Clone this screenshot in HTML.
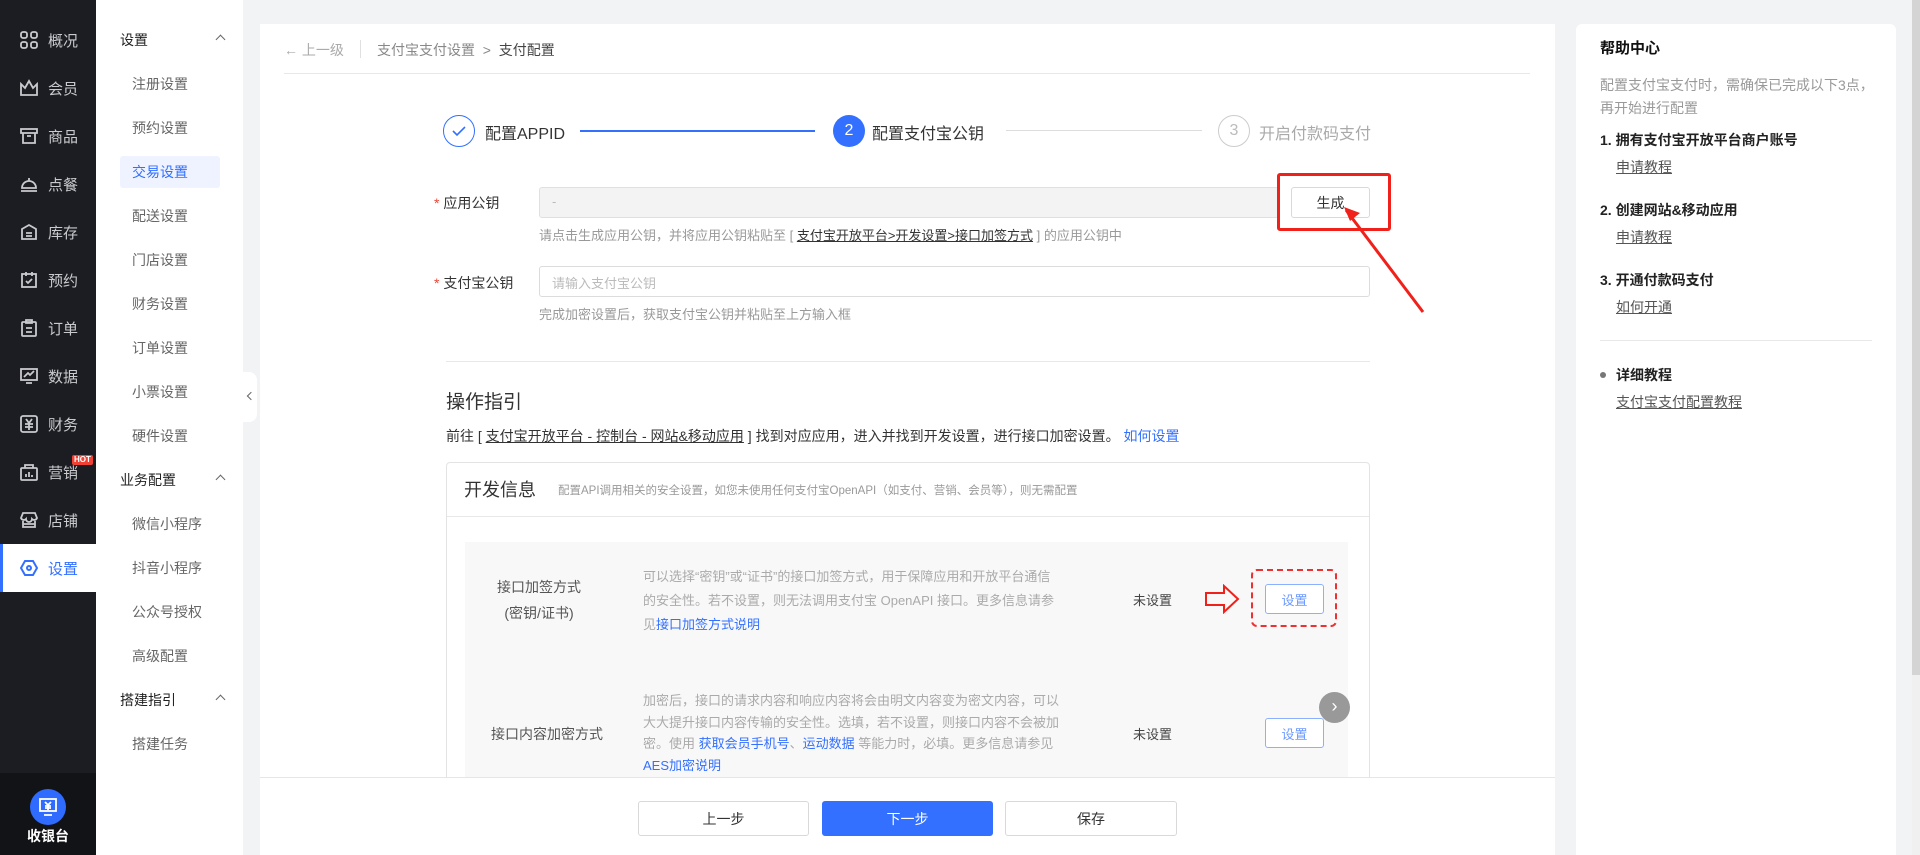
<!DOCTYPE html>
<html><head><meta charset="utf-8"><style>
*{margin:0;padding:0;box-sizing:border-box}
body{width:1920px;height:855px;overflow:hidden;background:#f2f3f5;font-family:"Liberation Sans","Noto Sans CJK SC",sans-serif;position:relative;color:#333}
.a{position:absolute;white-space:nowrap}
.nav{left:0;top:0;width:96px;height:855px;background:#1c1d22}
.ni{position:absolute;left:0;width:96px;height:48px;display:flex;align-items:center;color:#c9cacd;font-size:15px}
.ni svg{margin-left:20px;margin-right:10px}
.sm{left:96px;top:0;width:147px;height:855px;background:#fff}
.sh{position:absolute;left:24px;font-size:14px;color:#222}
.sh:after{content:"";position:absolute;left:97px;top:6px;width:6px;height:6px;border-left:1.5px solid #666;border-top:1.5px solid #666;transform:rotate(45deg)}
.si{position:absolute;left:36px;font-size:14px;color:#666}
.hint{font-size:13px;color:#999}
.btn{position:absolute;border:1px solid #d9d9d9;border-radius:3px;background:#fff;font-size:14px;display:flex;align-items:center;justify-content:center;color:#333}
.lk{color:#333;text-decoration:underline}
.bl{color:#3370ff}
.rp{font-size:14px}
</style></head><body>
<!-- left nav -->
<div class="a nav"></div>
<div class="a" style="left:0;top:773px;width:96px;height:82px;background:#121317"></div>
<div class="a" style="left:0;top:544px;width:96px;height:48px;background:#fff"></div>
<div class="a" style="left:0;top:544px;width:3px;height:48px;background:#3370ff"></div>
<div class="ni" style="top:16px"><svg width="18" height="18" viewBox="0 0 18 18" fill="none" stroke="#c9cacd" stroke-width="1.8"><rect x="1" y="1" width="6" height="6" rx="2"/><rect x="11" y="1" width="6" height="6" rx="2"/><rect x="1" y="11" width="6" height="6" rx="2"/><rect x="11" y="11" width="6" height="6" rx="2"/></svg>概况</div>
<div class="ni" style="top:64px"><svg width="18" height="18" viewBox="0 0 18 18" fill="none" stroke="#c9cacd" stroke-width="1.8"><path d="M1 5l4 4 4-7 4 7 4-4v11H1z"/></svg>会员</div>
<div class="ni" style="top:112px"><svg width="18" height="18" viewBox="0 0 18 18" fill="none" stroke="#c9cacd" stroke-width="1.8"><rect x="1" y="2" width="16" height="4"/><path d="M3 6v10h12V6M7 9h4"/></svg>商品</div>
<div class="ni" style="top:160px"><svg width="18" height="18" viewBox="0 0 18 18" fill="none" stroke="#c9cacd" stroke-width="1.8"><path d="M2 13a7 7 0 0 1 14 0zM9 3v3M1 16h16"/></svg>点餐</div>
<div class="ni" style="top:208px"><svg width="18" height="18" viewBox="0 0 18 18" fill="none" stroke="#c9cacd" stroke-width="1.8"><path d="M2 6l7-4 7 4v10H2zM6 10h6M6 13h6"/></svg>库存</div>
<div class="ni" style="top:256px"><svg width="18" height="18" viewBox="0 0 18 18" fill="none" stroke="#c9cacd" stroke-width="1.8"><rect x="2" y="3" width="14" height="13"/><path d="M6 1v4M12 1v4M6 10l2 2 4-4"/></svg>预约</div>
<div class="ni" style="top:304px"><svg width="18" height="18" viewBox="0 0 18 18" fill="none" stroke="#c9cacd" stroke-width="1.8"><rect x="2" y="3" width="14" height="14" rx="1"/><path d="M6 1h6v3H6zM6 9h6M6 13h6"/></svg>订单</div>
<div class="ni" style="top:352px"><svg width="18" height="18" viewBox="0 0 18 18" fill="none" stroke="#c9cacd" stroke-width="1.8"><rect x="1" y="2" width="16" height="11"/><path d="M4 10l4-4 2 2 4-4M6 16h6"/></svg>数据</div>
<div class="ni" style="top:400px"><svg width="18" height="18" viewBox="0 0 18 18" fill="none" stroke="#c9cacd" stroke-width="1.8"><rect x="1" y="1" width="16" height="16" rx="2"/><path d="M6 4l3 4 3-4M9 8v7M5 9h8M5 12h8"/></svg>财务</div>
<div class="ni" style="top:448px"><svg width="18" height="18" viewBox="0 0 18 18" fill="none" stroke="#c9cacd" stroke-width="1.8"><rect x="1" y="5" width="16" height="12" rx="1"/><path d="M5 5V2h8v3M6 14v-3M9 14V9M12 14v-2"/></svg>营销</div>
<div class="a" style="left:72px;top:455px;background:#f04134;color:#fff;font-size:8px;font-weight:bold;padding:0 2px;line-height:10px;border-radius:2px">HOT</div>
<div class="ni" style="top:496px"><svg width="18" height="18" viewBox="0 0 18 18" fill="none" stroke="#c9cacd" stroke-width="1.8"><path d="M3 2h12l2 5a3 3 0 0 1-5 1 3 3 0 0 1-6 0 3 3 0 0 1-5-1zM3 10v6h12v-6M3 13h12"/></svg>店铺</div>
<div class="ni" style="top:544px;color:#3370ff"><svg width="18" height="18" viewBox="0 0 18 18" fill="none" stroke="#3370ff" stroke-width="2"><path d="M5 2h8l4 7-4 7H5L1 9z"/><circle cx="9" cy="9" r="2"/></svg>设置</div>
<div class="a" style="left:30px;top:789px;width:36px;height:36px;border-radius:50%;background:#2f6bff"></div>
<svg class="a" style="left:38px;top:797px" width="20" height="20" viewBox="0 0 20 20" fill="none" stroke="#fff" stroke-width="1.8"><rect x="2" y="2" width="16" height="12"/><path d="M6 18h8M7 5l3 3 3-3M10 8v5M7 9h6M7 11h6"/></svg>
<div class="a" style="left:27px;top:826px;color:#fff;font-size:14px;font-weight:bold">收银台</div>
<!-- sub menu -->
<div class="a sm">
<div class="sh" style="top:30px">设置</div>
<div class="si" style="top:74px">注册设置</div>
<div class="si" style="top:118px">预约设置</div>
<div class="a" style="left:24px;top:156px;width:100px;height:32px;background:#eef3ff;border-radius:3px"></div>
<div class="si" style="top:162px;color:#3370ff">交易设置</div>
<div class="si" style="top:206px">配送设置</div>
<div class="si" style="top:250px">门店设置</div>
<div class="si" style="top:294px">财务设置</div>
<div class="si" style="top:338px">订单设置</div>
<div class="si" style="top:382px">小票设置</div>
<div class="si" style="top:426px">硬件设置</div>
<div class="sh" style="top:470px">业务配置</div>
<div class="si" style="top:514px">微信小程序</div>
<div class="si" style="top:558px">抖音小程序</div>
<div class="si" style="top:602px">公众号授权</div>
<div class="si" style="top:646px">高级配置</div>
<div class="sh" style="top:690px">搭建指引</div>
<div class="si" style="top:734px">搭建任务</div>
</div>
<div class="a" style="left:243px;top:372px;width:14px;height:50px;background:#fff;border-radius:0 8px 8px 0"></div>
<div class="a" style="left:248px;top:393px;width:6px;height:6px;border-left:1.5px solid #666;border-bottom:1.5px solid #666;transform:rotate(45deg)"></div>
<!-- main card -->
<div class="a" style="left:260px;top:24px;width:1295px;height:831px;background:#fff"></div>
<div class="a" style="left:284px;top:40px;font-size:14px;color:#aaa">← 上一级</div>
<div class="a" style="left:360px;top:40px;width:1px;height:18px;background:#e0e0e0"></div>
<div class="a" style="left:377px;top:40px;font-size:14px;color:#888">支付宝支付设置 &nbsp;&gt;&nbsp; <span style="color:#444">支付配置</span></div>
<div class="a" style="left:284px;top:73px;width:1246px;height:1px;background:#e8e8e8"></div>
<!-- steps -->
<div class="a" style="left:443px;top:115px;width:32px;height:32px;border:1.5px solid #3370ff;border-radius:50%"></div>
<svg class="a" style="left:451px;top:123px" width="16" height="16" viewBox="0 0 16 16" fill="none" stroke="#3370ff" stroke-width="1.6"><path d="M2 8l4 4 8-8"/></svg>
<div class="a" style="left:485px;top:120px;font-size:16px;color:#333">配置APPID</div>
<div class="a" style="left:580px;top:130px;width:235px;height:1.5px;background:#3370ff"></div>
<div class="a" style="left:833px;top:115px;width:32px;height:32px;background:#3370ff;border-radius:50%;color:#fff;font-size:16px;text-align:center;line-height:32px">2</div>
<div class="a" style="left:872px;top:120px;font-size:16px;color:#333">配置支付宝公钥</div>
<div class="a" style="left:1006px;top:130px;width:196px;height:1px;background:#ddd"></div>
<div class="a" style="left:1218px;top:115px;width:32px;height:32px;border:1.5px solid #ccc;border-radius:50%;color:#bbb;font-size:16px;text-align:center;line-height:29px">3</div>
<div class="a" style="left:1259px;top:120px;font-size:16px;color:#aaa">开启付款码支付</div>
<!-- form -->
<div class="a" style="left:434px;top:193px;font-size:14px;color:#333"><span style="color:#f04134">* </span>应用公钥</div>
<div class="a" style="left:539px;top:187px;width:740px;height:31px;background:#f3f3f3;border:1px solid #e0e0e0;border-radius:3px;font-size:13px;color:#bbb;padding:6px 12px">-</div>
<div class="btn" style="left:1291px;top:187px;width:79px;height:31px">生成</div>
<div class="a" style="left:1277px;top:173px;width:114px;height:58px;border:3px solid #f0201a;border-radius:3px"></div>
<svg class="a" style="left:1330px;top:200px" width="100" height="120"><path d="M93 112L16 10" stroke="#f0201a" stroke-width="3"/><path d="M14 7l16 6-10 8z" fill="#f0201a"/></svg>
<div class="a hint" style="left:539px;top:225px">请点击生成应用公钥，并将应用公钥粘贴至 [ <span class="lk">支付宝开放平台&gt;开发设置&gt;接口加签方式</span> ] 的应用公钥中</div>
<div class="a" style="left:434px;top:273px;font-size:14px;color:#333"><span style="color:#f04134">* </span>支付宝公钥</div>
<div class="a" style="left:539px;top:266px;width:831px;height:31px;border:1px solid #dcdcdc;border-radius:3px;font-size:13px;color:#bbb;padding:6px 12px">请输入支付宝公钥</div>
<div class="a hint" style="left:539px;top:304px">完成加密设置后，获取支付宝公钥并粘贴至上方输入框</div>
<div class="a" style="left:446px;top:361px;width:924px;height:1px;background:#e8e8e8"></div>
<div class="a" style="left:446px;top:387px;font-size:19px;color:#333">操作指引</div>
<div class="a" style="left:446px;top:426px;font-size:14px;color:#333">前往 [ <span class="lk">支付宝开放平台 - 控制台 - 网站&amp;移动应用</span> ] 找到对应应用，进入并找到开发设置，进行接口加密设置。 <span class="bl">如何设置</span></div>
<div class="a" style="left:446px;top:462px;width:924px;height:330px;border:1px solid #e3e3e3;border-radius:4px"></div>
<div class="a" style="left:464px;top:476px;font-size:18px;color:#333">开发信息</div>
<div class="a" style="left:558px;top:482px;font-size:11.5px;color:#999">配置API调用相关的安全设置，如您未使用任何支付宝OpenAPI（如支付、营销、会员等），则无需配置</div>
<div class="a" style="left:447px;top:516px;width:922px;height:1px;background:#e8e8e8"></div>
<div class="a" style="left:465px;top:542px;width:883px;height:236px;background:#f8f8f8"></div>
<div class="a" style="left:491px;top:574px;font-size:14px;color:#555;line-height:26px;text-align:center;width:96px">接口加签方式<br>(密钥/证书)</div>
<div class="a" style="left:643px;top:565px;font-size:13px;color:#aaa;line-height:24px">可以选择“密钥”或“证书”的接口加签方式，用于保障应用和开放平台通信<br>的安全性。若不设置，则无法调用支付宝 OpenAPI 接口。更多信息请参<br>见<span class="bl">接口加签方式说明</span></div>
<div class="a" style="left:1133px;top:590px;font-size:13px;color:#444">未设置</div>
<svg class="a" style="left:1204px;top:584px" width="38" height="30"><path d="M2 9h18V2l14 13-14 13v-7H2z" fill="none" stroke="#f0201a" stroke-width="2"/></svg>
<div class="a" style="left:1251px;top:569px;width:86px;height:58px;border:2px dashed #f03030;border-radius:6px"></div>
<div class="btn" style="left:1265px;top:584px;width:59px;height:30px;border-color:#8bb0ff;color:#6d9aff;font-size:13px">设置</div>
<div class="a" style="left:491px;top:724px;font-size:14px;color:#555">接口内容加密方式</div>
<div class="a" style="left:643px;top:690px;font-size:13px;color:#aaa;line-height:21.5px">加密后，接口的请求内容和响应内容将会由明文内容变为密文内容，可以<br>大大提升接口内容传输的安全性。选填，若不设置，则接口内容不会被加<br>密。使用 <span class="bl">获取会员手机号</span>、<span class="bl">运动数据</span> 等能力时，必填。更多信息请参见<br><span class="bl">AES加密说明</span></div>
<div class="a" style="left:1133px;top:724px;font-size:13px;color:#444">未设置</div>
<div class="btn" style="left:1265px;top:718px;width:59px;height:30px;border-color:#8bb0ff;color:#6d9aff;font-size:13px">设置</div>
<div class="a" style="left:1319px;top:692px;width:31px;height:31px;border-radius:50%;background:#999;color:#fff;font-size:18px;text-align:center;line-height:29px">›</div>
<!-- bottom bar -->
<div class="a" style="left:260px;top:777px;width:1295px;height:78px;background:#fff;border-top:1px solid #e6e6e6"></div>
<div class="btn" style="left:638px;top:801px;width:171px;height:35px">上一步</div>
<div class="btn" style="left:822px;top:801px;width:171px;height:35px;background:#3370ff;border-color:#3370ff;color:#fff">下一步</div>
<div class="btn" style="left:1005px;top:801px;width:172px;height:35px">保存</div>
<!-- right panel -->
<div class="a" style="left:1576px;top:24px;width:320px;height:831px;background:#fff;border-radius:6px 6px 0 0"></div>
<div class="a" style="left:1600px;top:37px;font-size:15px;font-weight:bold;color:#111">帮助中心</div>
<div class="a rp" style="left:1600px;top:74px;color:#999;line-height:23px">配置支付宝支付时，需确保已完成以下3点，<br>再开始进行配置</div>
<div class="a rp" style="left:1600px;top:130px;font-weight:bold;color:#222">1. 拥有支付宝开放平台商户账号</div>
<div class="a rp lk" style="left:1616px;top:157px;color:#555">申请教程</div>
<div class="a rp" style="left:1600px;top:200px;font-weight:bold;color:#222">2. 创建网站&amp;移动应用</div>
<div class="a rp lk" style="left:1616px;top:227px;color:#555">申请教程</div>
<div class="a rp" style="left:1600px;top:270px;font-weight:bold;color:#222">3. 开通付款码支付</div>
<div class="a rp lk" style="left:1616px;top:297px;color:#555">如何开通</div>
<div class="a" style="left:1600px;top:340px;width:272px;height:1px;background:#e8e8e8"></div>
<div class="a" style="left:1600px;top:372px;width:6px;height:6px;border-radius:50%;background:#777"></div>
<div class="a rp" style="left:1616px;top:365px;font-weight:bold;color:#222">详细教程</div>
<div class="a rp lk" style="left:1616px;top:392px;color:#555">支付宝支付配置教程</div>
<div class="a" style="left:1912px;top:0;width:8px;height:855px;background:#f0f0f0"></div>
<div class="a" style="left:1912px;top:0;width:8px;height:675px;background:#d4d4d4"></div>
</body></html>
